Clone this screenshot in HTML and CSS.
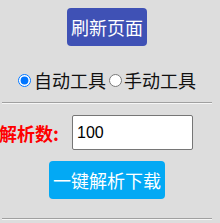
FILE: index.html
```html
<!DOCTYPE html>
<html lang="zh-CN">
<head>
    <meta charset="UTF-8">
    <meta name="viewport" content="width=device-width, initial-scale=1.0">
    <title>解析工具</title>
    <link rel="stylesheet" href="styles.css">
</head>
<body>
    <div class="panel">
        <div class="top">
            <button class="btn btn-refresh">刷新页面</button>
        </div>

        <div class="radios">
            <label class="radio-item"><input type="radio" name="mode" checked>自动工具</label>
            <label class="radio-item"><input type="radio" name="mode">手动工具</label>
        </div>

        <hr class="line">

        <div class="count-row">
            <label class="count-label" for="count">解析数:</label>
            <input type="text" id="count" class="count-input" value="100">
        </div>

        <div class="bottom">
            <button class="btn btn-download">一键解析下载</button>
        </div>

        <hr class="line line-last">
    </div>
</body>
</html>
```

FILE: styles.css
```css
body {
    margin: 0;
    background-color: #dddddd;
    font-family: "Noto Sans CJK SC", "Liberation Sans", sans-serif;
    color: #111;
}
.panel {
    width: 210px;
    margin-left: 2px;
}
.top, .bottom {
    display: flex;
    justify-content: center;
}
.top {
    padding-top: 8px;
}
.btn {
    height: 38px;
    padding: 0 4px;
    border: none;
    border-radius: 4px;
    color: white;
    font-family: inherit;
    font-size: 18px;
    line-height: 38px;
    cursor: pointer;
}
.btn-refresh {
    background-color: #3f51b5;
}
.btn-download {
    background-color: #03a9f4;
}
.radios {
    display: flex;
    justify-content: center;
    align-items: center;
    height: 26px;
    margin-top: 21px;
    font-size: 18px;
    line-height: 26px;
}
.radio-item {
    display: flex;
    align-items: center;
}
.radio-item input {
    width: 13px;
    height: 13px;
    margin: 0 3px 0 0;
}
.radio-item + .radio-item {
    margin-left: 3px;
}
.radio-item + .radio-item input {
    margin-right: 2px;
}
.line {
    height: 0;
    margin: 9px 0 0;
    border: none;
    border-top: 1px solid #a0a0a0;
    border-bottom: 1px solid #f6f6f6;
}
.count-row {
    display: flex;
    align-items: center;
    margin-top: 11px;
    margin-left: -3px;
}
.count-label {
    width: 73px;
    color: #ff0000;
    font-size: 18px;
    font-weight: bold;
    line-height: 26px;
}
.count-input {
    width: 121px;
    height: 35px;
    box-sizing: border-box;
    padding: 0 4px;
    border: 1px solid #767676;
    border-radius: 2px;
    background: white;
    font-family: "Liberation Sans", sans-serif;
    font-size: 16px;
    color: #000;
}
.bottom {
    margin-top: 11px;
}
.line-last {
    margin-top: 19px;
}
```
